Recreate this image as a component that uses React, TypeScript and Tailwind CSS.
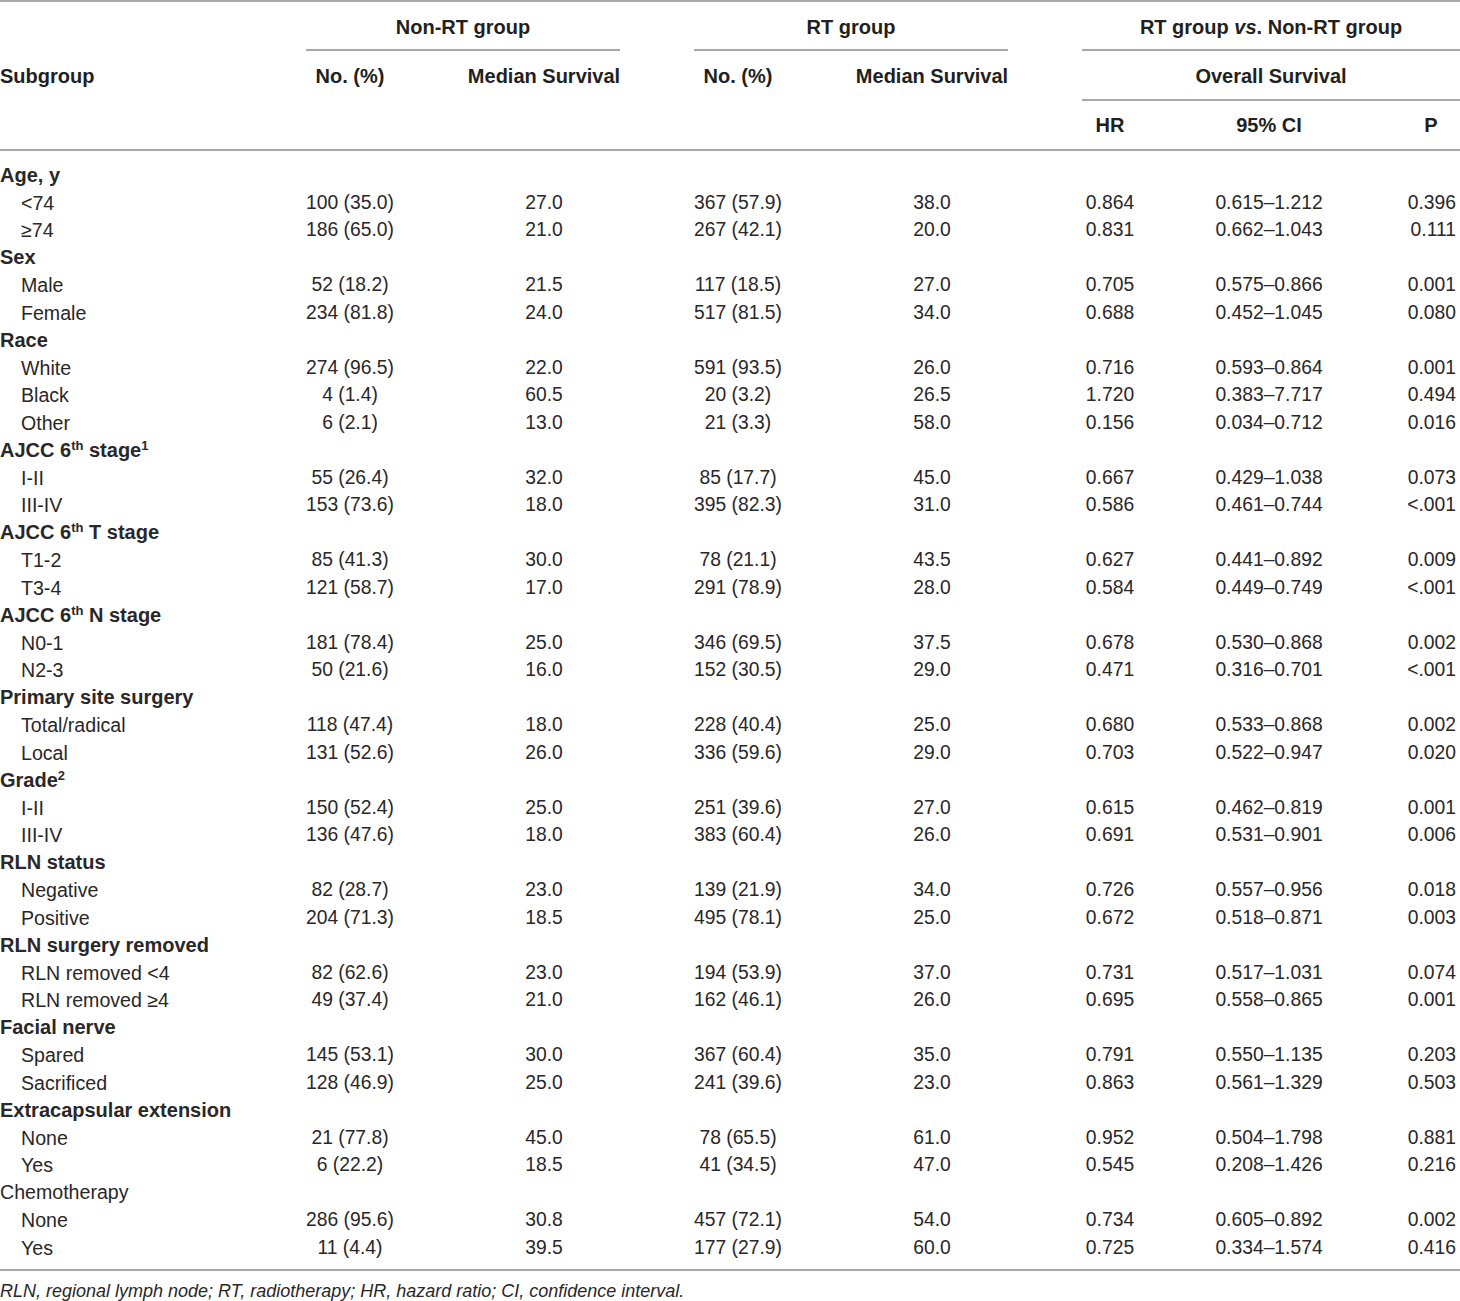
import React from "react";

type Row = string[];
interface Section {
  title: React.ReactNode;
  bold?: boolean;
  rows: Row[];
}

function Sup({ children }: { children: React.ReactNode }) {
  return <sup className="text-[13px] top-[-7px]">{children}</sup>;
}

const sections: Section[] = [
  {
    title: "Age, y",
    rows: [
      ["<74", "100 (35.0)", "27.0", "367 (57.9)", "38.0", "0.864", "0.615–1.212", "0.396"],
      ["≥74", "186 (65.0)", "21.0", "267 (42.1)", "20.0", "0.831", "0.662–1.043", "0.111"],
    ],
  },
  {
    title: "Sex",
    rows: [
      ["Male", "52 (18.2)", "21.5", "117 (18.5)", "27.0", "0.705", "0.575–0.866", "0.001"],
      ["Female", "234 (81.8)", "24.0", "517 (81.5)", "34.0", "0.688", "0.452–1.045", "0.080"],
    ],
  },
  {
    title: "Race",
    rows: [
      ["White", "274 (96.5)", "22.0", "591 (93.5)", "26.0", "0.716", "0.593–0.864", "0.001"],
      ["Black", "4 (1.4)", "60.5", "20 (3.2)", "26.5", "1.720", "0.383–7.717", "0.494"],
      ["Other", "6 (2.1)", "13.0", "21 (3.3)", "58.0", "0.156", "0.034–0.712", "0.016"],
    ],
  },
  {
    title: (
      <>
        AJCC 6<Sup>th</Sup> stage<Sup>1</Sup>
      </>
    ),
    rows: [
      ["I-II", "55 (26.4)", "32.0", "85 (17.7)", "45.0", "0.667", "0.429–1.038", "0.073"],
      ["III-IV", "153 (73.6)", "18.0", "395 (82.3)", "31.0", "0.586", "0.461–0.744", "<.001"],
    ],
  },
  {
    title: (
      <>
        AJCC 6<Sup>th</Sup> T stage
      </>
    ),
    rows: [
      ["T1-2", "85 (41.3)", "30.0", "78 (21.1)", "43.5", "0.627", "0.441–0.892", "0.009"],
      ["T3-4", "121 (58.7)", "17.0", "291 (78.9)", "28.0", "0.584", "0.449–0.749", "<.001"],
    ],
  },
  {
    title: (
      <>
        AJCC 6<Sup>th</Sup> N stage
      </>
    ),
    rows: [
      ["N0-1", "181 (78.4)", "25.0", "346 (69.5)", "37.5", "0.678", "0.530–0.868", "0.002"],
      ["N2-3", "50 (21.6)", "16.0", "152 (30.5)", "29.0", "0.471", "0.316–0.701", "<.001"],
    ],
  },
  {
    title: "Primary site surgery",
    rows: [
      ["Total/radical", "118 (47.4)", "18.0", "228 (40.4)", "25.0", "0.680", "0.533–0.868", "0.002"],
      ["Local", "131 (52.6)", "26.0", "336 (59.6)", "29.0", "0.703", "0.522–0.947", "0.020"],
    ],
  },
  {
    title: (
      <>
        Grade<Sup>2</Sup>
      </>
    ),
    rows: [
      ["I-II", "150 (52.4)", "25.0", "251 (39.6)", "27.0", "0.615", "0.462–0.819", "0.001"],
      ["III-IV", "136 (47.6)", "18.0", "383 (60.4)", "26.0", "0.691", "0.531–0.901", "0.006"],
    ],
  },
  {
    title: "RLN status",
    rows: [
      ["Negative", "82 (28.7)", "23.0", "139 (21.9)", "34.0", "0.726", "0.557–0.956", "0.018"],
      ["Positive", "204 (71.3)", "18.5", "495 (78.1)", "25.0", "0.672", "0.518–0.871", "0.003"],
    ],
  },
  {
    title: "RLN surgery removed",
    rows: [
      ["RLN removed <4", "82 (62.6)", "23.0", "194 (53.9)", "37.0", "0.731", "0.517–1.031", "0.074"],
      ["RLN removed ≥4", "49 (37.4)", "21.0", "162 (46.1)", "26.0", "0.695", "0.558–0.865", "0.001"],
    ],
  },
  {
    title: "Facial nerve",
    rows: [
      ["Spared", "145 (53.1)", "30.0", "367 (60.4)", "35.0", "0.791", "0.550–1.135", "0.203"],
      ["Sacrificed", "128 (46.9)", "25.0", "241 (39.6)", "23.0", "0.863", "0.561–1.329", "0.503"],
    ],
  },
  {
    title: "Extracapsular extension",
    rows: [
      ["None", "21 (77.8)", "45.0", "78 (65.5)", "61.0", "0.952", "0.504–1.798", "0.881"],
      ["Yes", "6 (22.2)", "18.5", "41 (34.5)", "47.0", "0.545", "0.208–1.426", "0.216"],
    ],
  },
  {
    title: "Chemotherapy",
    bold: false,
    rows: [
      ["None", "286 (95.6)", "30.8", "457 (72.1)", "54.0", "0.734", "0.605–0.892", "0.002"],
      ["Yes", "11 (4.4)", "39.5", "177 (27.9)", "60.0", "0.725", "0.334–1.574", "0.416"],
    ],
  },
];

const grid = "grid grid-cols-[253px_194px_194px_194px_194px_162px_211px_58px]";
const head = "font-bold text-[20px] text-[#231f20]";

function DataRow({ row }: { row: Row }) {
  return (
    <div className={`${grid} h-[27.5px] items-center`}>
      <div className="pl-[21px] whitespace-nowrap text-[19.6px]">{row[0]}</div>
      <div className="text-center">{row[1]}</div>
      <div className="text-center">{row[2]}</div>
      <div className="text-center">{row[3]}</div>
      <div className="text-center">{row[4]}</div>
      <div className="text-center">{row[5]}</div>
      <div className="text-center pr-[55px]">{row[6]}</div>
      <div className="text-right pr-[4px]">{row[7]}</div>
    </div>
  );
}

export default function App() {
  return (
    <div className="w-[1460px] bg-white font-['Liberation_Sans',Arial,sans-serif] text-[19.3px] text-[#2a2728]">
      <div className="border-t-2 border-[#a8a8a8]">
        <div className={`${grid} grid-rows-[49px_50px_48px]`}>
          <div className={`${head} col-start-1 row-start-1 row-span-3 flex items-center`}>Subgroup</div>

          <div className={`${head} col-start-2 col-span-2 row-start-1 ml-[53px] mr-[21px] border-b-2 border-[#a8a8a8] flex items-center justify-center pt-[2px]`}>
            Non-RT group
          </div>
          <div className={`${head} col-start-4 col-span-2 row-start-1 ml-[53px] mr-[21px] border-b-2 border-[#a8a8a8] flex items-center justify-center pt-[2px]`}>
            RT group
          </div>
          <div className={`${head} col-start-6 col-span-3 row-start-1 ml-[53px] border-b-2 border-[#a8a8a8] flex items-center justify-center pt-[2px]`}>
            <span>
              RT group <i>vs</i>. Non-RT group
            </span>
          </div>

          <div className={`${head} col-start-2 row-start-2 flex items-center justify-center`}>No. (%)</div>
          <div className={`${head} col-start-3 row-start-2 flex items-center justify-center`}>Median Survival</div>
          <div className={`${head} col-start-4 row-start-2 flex items-center justify-center`}>No. (%)</div>
          <div className={`${head} col-start-5 row-start-2 flex items-center justify-center`}>Median Survival</div>
          <div className={`${head} col-start-6 col-span-3 row-start-2 ml-[53px] border-b-2 border-[#a8a8a8] flex items-center justify-center pt-[2px]`}>
            Overall Survival
          </div>

          <div className={`${head} col-start-6 row-start-3 flex items-center justify-center`}>HR</div>
          <div className={`${head} col-start-7 row-start-3 flex items-center justify-center pr-[55px]`}>95% CI</div>
          <div className={`${head} col-start-8 row-start-3 flex items-center justify-center`}>P</div>
        </div>
      </div>

      <div className="border-t-2 border-b-2 border-[#a8a8a8] pt-[10px] pb-[8px]">
        {sections.map((s, i) => (
          <div key={i}>
            <div className={`h-[27.5px] flex items-center whitespace-nowrap ${s.bold === false ? "text-[19.6px]" : "font-bold text-[20px]"}`}>
              <span>{s.title}</span>
            </div>
            {s.rows.map((r, j) => (
              <DataRow key={j} row={r} />
            ))}
          </div>
        ))}
      </div>

      <div className="pt-[9px] italic text-[18px] leading-[22px]">
        RLN, regional lymph node; RT, radiotherapy; HR, hazard ratio; CI, confidence interval.
      </div>
    </div>
  );
}
